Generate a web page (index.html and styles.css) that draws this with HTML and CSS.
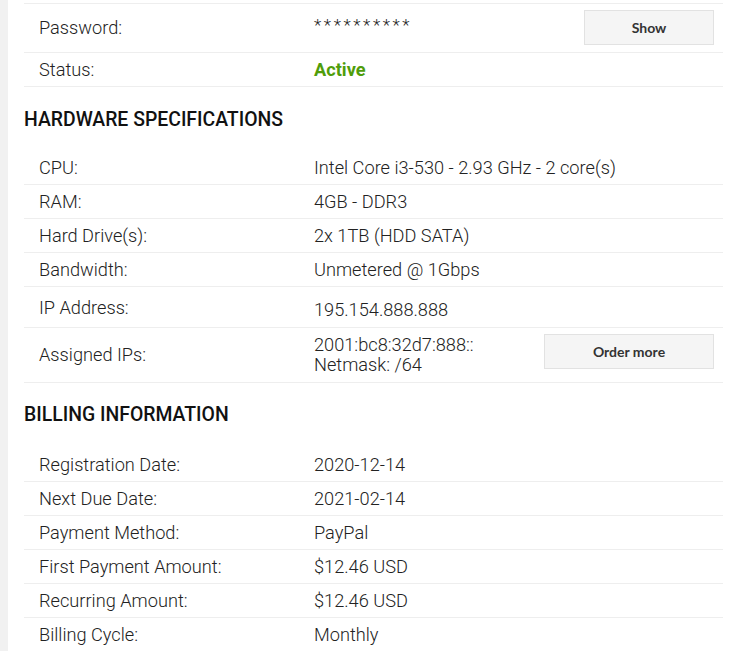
FILE: index.html
```html
<!DOCTYPE html>
<html>
<head>
<meta charset="utf-8">
<link rel="stylesheet" href="styles.css">
</head>
<body>
<div class="layout">
  <aside class="sidebar"></aside>
  <main class="content">
    <div class="top-edge"></div>
    <div class="row row-tall">
      <div class="label">Password:</div>
      <div class="value mask">**********</div>
      <div class="action"><button class="btn btn-show">Show</button></div>
    </div>
    <div class="row">
      <div class="label">Status:</div>
      <div class="value status-active">Active</div>
    </div>

    <h2 class="section-title">HARDWARE SPECIFICATIONS</h2>
    <div class="row">
      <div class="label">CPU:</div>
      <div class="value">Intel Core i3-530 - 2.93 GHz - 2 core(s)</div>
    </div>
    <div class="row">
      <div class="label">RAM:</div>
      <div class="value">4GB - DDR3</div>
    </div>
    <div class="row">
      <div class="label">Hard Drive(s):</div>
      <div class="value">2x 1TB (HDD SATA)</div>
    </div>
    <div class="row">
      <div class="label">Bandwidth:</div>
      <div class="value">Unmetered @ 1Gbps</div>
    </div>
    <div class="row row-ip">
      <div class="label">IP Address:</div>
      <div class="value value-ip">195.154.888.888</div>
    </div>
    <div class="row row-assigned">
      <div class="label">Assigned IPs:</div>
      <div class="value value-multi">2001:bc8:32d7:888::<br>Netmask: /64</div>
      <div class="action action-top"><button class="btn btn-order">Order more</button></div>
    </div>

    <h2 class="section-title section-billing">BILLING INFORMATION</h2>
    <div class="row">
      <div class="label">Registration Date:</div>
      <div class="value">2020-12-14</div>
    </div>
    <div class="row">
      <div class="label">Next Due Date:</div>
      <div class="value">2021-02-14</div>
    </div>
    <div class="row">
      <div class="label">Payment Method:</div>
      <div class="value">PayPal</div>
    </div>
    <div class="row">
      <div class="label">First Payment Amount:</div>
      <div class="value">$12.46 USD</div>
    </div>
    <div class="row">
      <div class="label">Recurring Amount:</div>
      <div class="value">$12.46 USD</div>
    </div>
    <div class="row">
      <div class="label">Billing Cycle:</div>
      <div class="value">Monthly</div>
    </div>
  </main>
</div>
</body>
</html>
```

FILE: styles.css
```css
* { box-sizing: border-box; }
html, body {
  margin: 0;
  padding: 0;
  background: #ffffff;
  height: 100%;
  overflow: hidden;
}
body {
  font-family: Roboto, "Liberation Sans", Arial, sans-serif;
  color: #333333;
}
.layout {
  display: flex;
  min-height: 100%;
}
.sidebar {
  width: 8px;
  flex: 0 0 8px;
  background: #f1f1f1;
}
.content {
  margin-left: 16px;
  width: 699px;
}
.top-edge {
  height: 4px;
  border-bottom: 1px solid #eeeeee;
}
.row {
  display: grid;
  grid-template-columns: 275px 1fr auto;
  align-items: center;
  min-height: 34px;
  padding: 0 9px 0 15px;
  border-bottom: 1px solid #eeeeee;
  font-size: 18.2px;
  font-weight: 300;
  line-height: 20px;
}
.row-tall { min-height: 49px; }
.row-tall .action { padding-bottom: 1px; }
.row-ip { min-height: 41px; }
.row-ip .label { padding-top: 1px; }
.value-ip { padding-top: 6px; }
.row-assigned { min-height: 55px; }
.action-top { align-self: start; padding-top: 6px; }
.label { color: #222222; }
.value { color: #222222; }
.mask { align-self: start; padding-top: 11px; letter-spacing: 2.6px; font-size: 17px; }
.status-active { color: #4f9d0a; font-weight: bold; }
.section-title {
  margin: 21px 0 19px 0;
  font-family: Roboto, "Liberation Sans", sans-serif;
  font-size: 19.4px;
  line-height: 24px;
  font-weight: 500;
  color: #111111;
}
.section-billing { margin-top: 20px; margin-bottom: 21px; }
.btn {
  display: block;
  font-family: Lato, "Liberation Sans", sans-serif;
  font-weight: bold;
  font-size: 14px;
  color: #333333;
  background: #f5f5f5;
  border: 1px solid #e2e2e2;
  height: 35px;
  padding: 0;
  cursor: pointer;
}
.btn-show { width: 130px; }
.btn-order { width: 170px; }
```
